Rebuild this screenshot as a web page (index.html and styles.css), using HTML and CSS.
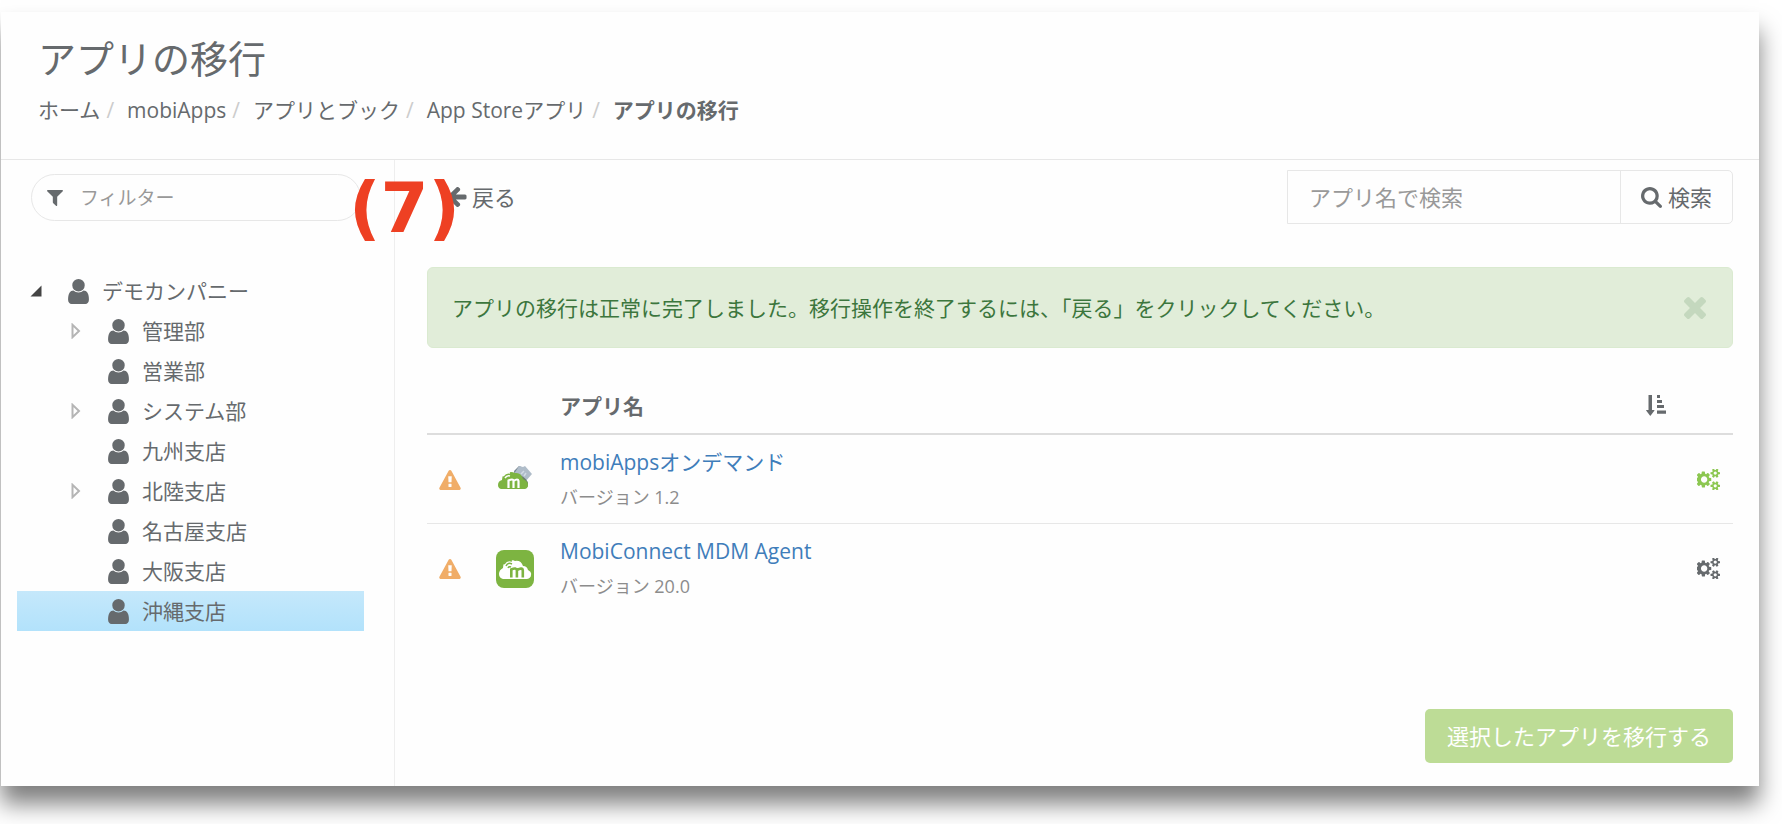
FILE: index.html
```html
<!DOCTYPE html>
<html lang="ja">
<head>
<meta charset="utf-8">
<title>アプリの移行</title>
<link rel="stylesheet" href="styles.css">
</head>
<body>
<svg class="sprite" aria-hidden="true">
  <symbol id="i-filter" viewBox="192 256 1408 1408"><path d="M1595 295q17 41-14 70l-493 493v742q0 42-39 59-13 5-25 5-27 0-45-19l-256-256q-19-19-19-45v-486l-493-493q-31-29-14-70 17-39 59-39h1280q42 0 59 39z"/></symbol>
  <symbol id="i-search" viewBox="64 128 1664 1664"><path d="M1216 832q0-185-131.5-316.5t-316.5-131.5-316.5 131.5-131.5 316.5 131.5 316.5 316.5 131.5 316.5-131.5 131.5-316.5zm512 832q0 52-38 90t-90 38q-54 0-90-38l-343-342q-179 124-399 124-143 0-273.5-55.5t-225-150-150-225-55.5-273.5 55.5-273.5 150-225 225-150 273.5-55.5 273.5 55.5 225 150 150 225 55.5 273.5q0 220-124 399l343 343q37 37 37 90z"/></symbol>
  <symbol id="i-user" viewBox="256 128 1280 1536"><path d="M1536 1399q0 109-62.5 187t-150.5 78h-854q-88 0-150.5-78t-62.5-187q0-85 8.5-160.5t31.5-152 58.5-131 94-89 134.5-34.5q131 128 313 128t313-128q76 0 134.5 34.5t94 89 58.5 131 31.5 152 8.5 160.5zm-256-887q0 159-112.5 271.5t-271.5 112.5-271.5-112.5-112.5-271.5 112.5-271.5 271.5-112.5 271.5 112.5 112.5 271.5z"/></symbol>
  <symbol id="i-warning" viewBox="0 0 1792 1664"><path d="M1024 1375v-190q0-14-9.5-23.5t-22.5-9.5h-192q-13 0-22.5 9.5t-9.5 23.5v190q0 14 9.5 23.5t22.5 9.5h192q13 0 22.5-9.5t9.5-23.5zm-2-374l18-459q0-12-10-19-13-11-24-11h-220q-11 0-24 11-10 7-10 21l17 457q0 10 10 16.5t24 6.5h185q14 0 23.5-6.5t10.5-16.5zm-14-934l768 1408q35 63-2 126-17 29-46.5 46t-63.5 17h-1536q-34 0-63.5-17t-46.5-46q-37-63-2-126l768-1408q17-31 47-49t65-18 65 18 47 49z"/></symbol>
  <symbol id="i-times" viewBox="302 238 1188 1188"><path d="M1490 1322q0 40-28 68l-136 136q-28 28-68 28t-68-28l-294-294-294 294q-28 28-68 28t-68-28l-136-136q-28-28-28-68t28-68l294-294-294-294q-28-28-28-68t28-68l136-136q28-28 68-28t68 28l294 294 294-294q28-28 68-28t68 28l136 136q28 28 28 68t-28 68l-294 294 294 294q28 28 28 68z" transform="translate(0 -128)"/></symbol>
  <symbol id="i-back" viewBox="192 190 1472 1542"><path d="M1664 896v128q0 53-32.500 90.500t-84.500 37.500h-704l293 294q38 36 38 90t-38 90l-75 76q-37 37-90 37-52 0-91-37l-651-652q-37-37-37-90 0-52 37-91l651-650q38-38 91-38 52 0 90 38l75 74q38 38 38 91t-38 91l-293 293h704q52 0 84.500 37.500t32.500 90.500z"/></symbol>
  <symbol id="i-sort" viewBox="0 0 20 21"><path d="M2.500 0h3.500v15h2.200q.6.200.1.800l-3.600 4.700q-.4.400-.8 0L.3 15.800q-.5-.600.1-.8h2.100zM11 0h3v3h-3zM11 5h5v3h-5zM11 10h7v3h-7zM11 15.500h9v3.200h-9z"/></symbol>
  <symbol id="i-cogs" viewBox="0 64 1856 1664"><path d="M832 896q0-106-75-181t-181-75-181 75-75 181 75 181 181 75 181-75 75-181zm768 512q0-52-38-90t-90-38-90 38-38 90q0 53 37.500 90.500t90.500 37.500 90.500-37.500 37.500-90.500zm0-1024q0-52-38-90t-90-38-90 38-38 90q0 53 37.500 90.500t90.500 37.500 90.500-37.500 37.500-90.500zm-448 421v185q0 10-7 19.500t-16 10.500l-155 24q-11 35-32 76 34 48 90 115 7 11 7 20 0 12-7 19-23 30-82.500 89.500t-78.500 59.500q-11 0-21-7l-115-90q-37 19-77 31-11 108-23 155-7 24-30 24h-186q-11 0-20-7.500t-10-17.500l-23-153q-34-10-75-31l-118 89q-7 7-20 7-11 0-21-8-144-133-144-160 0-9 7-19 10-14 41-53t47-61q-23-44-35-82l-152-24q-10-1-17-9.500t-7-19.500v-185q0-10 7-19.500t16-10.500l155-24q11-35 32-76-34-48-90-115-7-11-7-20 0-12 7-20 22-30 82-89t79-59q11 0 21 7l115 90q34-18 77-32 11-108 23-154 7-24 30-24h186q11 0 20 7.500t10 17.500l23 153q34 10 75 31l118-89q8-7 20-7 11 0 21 8 144 133 144 160 0 8-7 19-12 16-42 54t-45 60q23 48 34 82l152 23q10 2 17 10.500t7 19.500zm704 533v140q0 16-149 31-12 27-30 52 51 113 51 138 0 4-4 7-122 71-124 71-8 0-46-47t-52-68q-20 2-30 2t-30-2q-14 21-52 68t-46 47q-2 0-124-71-4-3-4-7 0-25 51-138-18-25-30-52-149-15-149-31v-140q0-16 149-31 13-29 30-52-51-113-51-138 0-4 4-7 4-2 35-20t59-34 30-16q8 0 46 46.500t52 67.500q20-2 30-2t30 2q51-71 92-112l6-2q4 0 124 70 4 3 4 7 0 25-51 138 17 23 30 52 149 15 149 31zm0-1024v140q0 16-149 31-12 27-30 52 51 113 51 138 0 4-4 7-122 71-124 71-8 0-46-47t-52-68q-20 2-30 2t-30-2q-14 21-52 68t-46 47q-2 0-124-71-4-3-4-7 0-25 51-138-18-25-30-52-149-15-149-31v-140q0-16 149-31 13-29 30-52-51-113-51-138 0-4 4-7 4-2 35-20t59-34 30-16q8 0 46 46.500t52 67.500q20-2 30-2t30 2q51-71 92-112l6-2q4 0 124 70 4 3 4 7 0 25-51 138 17 23 30 52 149 15 149 31z"/></symbol>
</svg>

<div class="panel">
  <header class="page-head">
    <h1>アプリの移行</h1>
    <nav aria-label="パンくずリスト">
      <ol class="crumbs">
        <li><a href="#">ホーム</a></li>
        <li><a href="#">mobiApps</a></li>
        <li><a href="#">アプリとブック</a></li>
        <li><a href="#">App Storeアプリ</a></li>
        <li class="current">アプリの移行</li>
      </ol>
    </nav>
  </header>

  <div class="body">
    <aside class="side">
      <label class="filter">
        <svg class="ic-filter"><use href="#i-filter"/></svg>
        <input type="text" placeholder="フィルター" aria-label="フィルター">
      </label>
      <ul class="tree">
        <li class="node"><button class="toggle" aria-label="閉じる"><svg class="open" viewBox="0 0 12 12"><path d="M11.500.5v11H.5z"/></svg></button><svg class="ic-user"><use href="#i-user"/></svg><span>デモカンパニー</span></li>
        <li class="node child"><button class="toggle" aria-label="開く"><svg class="closed" viewBox="0 0 10 16"><path d="M1.500 1.800v12.400L8 8z"/></svg></button><svg class="ic-user"><use href="#i-user"/></svg><span>管理部</span></li>
        <li class="node child"><span class="toggle"></span><svg class="ic-user"><use href="#i-user"/></svg><span>営業部</span></li>
        <li class="node child"><button class="toggle" aria-label="開く"><svg class="closed" viewBox="0 0 10 16"><path d="M1.500 1.800v12.400L8 8z"/></svg></button><svg class="ic-user"><use href="#i-user"/></svg><span>システム部</span></li>
        <li class="node child"><span class="toggle"></span><svg class="ic-user"><use href="#i-user"/></svg><span>九州支店</span></li>
        <li class="node child"><button class="toggle" aria-label="開く"><svg class="closed" viewBox="0 0 10 16"><path d="M1.500 1.800v12.400L8 8z"/></svg></button><svg class="ic-user"><use href="#i-user"/></svg><span>北陸支店</span></li>
        <li class="node child"><span class="toggle"></span><svg class="ic-user"><use href="#i-user"/></svg><span>名古屋支店</span></li>
        <li class="node child"><span class="toggle"></span><svg class="ic-user"><use href="#i-user"/></svg><span>大阪支店</span></li>
        <li class="node child selected"><span class="toggle"></span><svg class="ic-user"><use href="#i-user"/></svg><span>沖縄支店</span></li>
      </ul>
    </aside>

    <main class="main">
      <div class="toolbar">
        <a class="back" href="#"><svg class="ic-back"><use href="#i-back"/></svg>戻る</a>
        <span class="step">(7)</span>
        <form class="search">
          <input type="text" placeholder="アプリ名で検索" aria-label="アプリ名で検索">
          <button type="button"><svg class="ic-search"><use href="#i-search"/></svg>検索</button>
        </form>
      </div>

      <div class="alert" role="status">
        <span>アプリの移行は正常に完了しました。移行操作を終了するには、「戻る」をクリックしてください。</span>
        <button class="close" aria-label="閉じる"><svg class="ic-times"><use href="#i-times"/></svg></button>
      </div>

      <table class="apps">
        <colgroup><col class="c-warn"><col class="c-icon"><col><col class="c-sort"><col class="c-act"></colgroup>
        <thead>
          <tr><th></th><th></th><th>アプリ名</th><th><svg class="ic-sort"><use href="#i-sort"/></svg></th><th></th></tr>
        </thead>
        <tbody>
          <tr>
            <td><svg class="ic-warning"><use href="#i-warning"/></svg></td>
            <td>
              <svg class="ic-app" viewBox="0 0 38 38">
                <path fill="#78868f" d="M18 10l5-5 5 2 3 6-4 5-8 1z"/>
                <path fill="#afbcc9" d="M23 5l4 1 2-1 7 8-7 8-11-8z"/>
                <path fill="#6c7f6a" d="M24 14q8 4 8 9 0 4-3 4l-6-1z"/>
                <path fill="none" stroke="#d0dae4" stroke-width="1.500" d="M25 13l3-3M28 15l2-3"/>
                <path fill="#7db441" d="M5 28q-3-1-3-4 0-4 4-5 0-6 5-7 4-2 8 0 6-1 8 6 5 2 5 6 0 3-3 4z"/>
                <path fill="none" stroke="#fff" stroke-width="1.500" d="M7 15q3-4 7-3M9 17q2-3 5-2"/>
                <path fill="none" stroke="#fff" stroke-width="2.200" d="M12.500 27v-7.500q4.500-2 5 0V27m0-7q4.500-3 5 0V27"/>
              </svg>
            </td>
            <td><a class="name" href="#">mobiAppsオンデマンド</a><div class="ver">バージョン 1.2</div></td>
            <td></td>
            <td><button class="gear on" aria-label="設定"><svg class="ic-cogs"><use href="#i-cogs"/></svg></button></td>
          </tr>
          <tr>
            <td><svg class="ic-warning"><use href="#i-warning"/></svg></td>
            <td>
              <svg class="ic-app" viewBox="0 0 38 38">
                <rect width="38" height="38" rx="8" fill="#7db441"/>
                <path fill="#fff" d="M7 29q-4-1-4-5t4-6q0-7 7-8 4 0 5 1 6-1 8 5 4 0 5 4 4 2 3 5 0 3-4 4z"/>
                <path fill="none" stroke="#7db441" stroke-width="1.500" d="M8 14q3-5 8-3M10 16q2-4 6-2M12 18q1-2 3-1"/>
                <path fill="none" stroke="#7db441" stroke-width="2.600" d="M15.300 27.500v-8q5.200-2.500 5.600 1v7m0-7.500q5.600-3 5.900.5v7"/>
              </svg>
            </td>
            <td><a class="name" href="#">MobiConnect MDM Agent</a><div class="ver">バージョン 20.0</div></td>
            <td></td>
            <td><button class="gear" aria-label="設定"><svg class="ic-cogs"><use href="#i-cogs"/></svg></button></td>
          </tr>
        </tbody>
      </table>

      <div class="actions"><button class="submit" disabled>選択したアプリを移行する</button></div>
    </main>
  </div>
</div>
</body>
</html>
```
FILE: styles.css
```css
* { box-sizing: border-box; }

body {
  margin: 0;
  padding: 12px 23px 39px 1px;
  background: #fff;
  color: #666a6d;
  font: 21px/32px "Open Sans", "Noto Sans CJK JP", sans-serif;
  overflow: hidden;
}

button, input { font: inherit; color: inherit; border: 0; background: none; padding: 0; margin: 0; }
button { cursor: pointer; }
input { min-width: 0; outline: 0; }
input::placeholder { color: #999; opacity: 1; }
a { color: inherit; text-decoration: none; }
svg { display: block; flex: none; fill: currentColor; }
.sprite { display: none; }

.panel {
  background: #fefefe;
  box-shadow: 0 18px 22px rgba(0, 0, 0, .5);
}

/* Heading and breadcrumb */
.page-head { padding: 22px 37px 33px; border-bottom: 1px solid #e7e7e7; }
h1 { margin: 0 0 12px; font-size: 38px; line-height: 48px; font-weight: 400; }
.crumbs { display: flex; margin: 0; padding: 0; list-style: none; }
.crumbs li + li::before { content: "/"; color: #ccc; font-weight: 400; margin: 0 13px 0 6px; }
.crumbs .current { font-weight: 700; }

.body { display: flex; }

/* Department tree */
.side { flex: none; width: 394px; padding: 14px 30px 24px 16px; border-right: 1px solid #eee; }
.filter {
  display: flex;
  align-items: center;
  gap: 17px;
  height: 47px;
  margin: 0 3px 50px 14px;
  padding: 0 15px;
  border: 1px solid #e7e7e7;
  border-radius: 24px;
}
.filter input { flex: 1; font-size: 19px; }
.ic-filter { width: 16px; height: 16px; }
.tree { margin: 0; padding: 0; list-style: none; }
.node { display: flex; align-items: center; height: 40px; padding-left: 11px; }
.node.child { padding-left: 51px; }
.node.selected { background: linear-gradient(#c5e8fb, #b2e2fb); }
.toggle { display: flex; justify-content: center; width: 16px; margin-right: 24px; }
.open { width: 12px; height: 12px; fill: #444; }
.closed { width: 10px; height: 16px; fill: none; stroke: #b5b5b5; stroke-width: 2; }
.ic-user { width: 21px; height: 25px; margin-right: 13px; }

/* Work area */
.main { flex: 1; min-width: 0; padding: 10px 26px 23px 32px; }
.toolbar { position: relative; display: flex; align-items: center; justify-content: space-between; font-size: 22px; margin-bottom: 43px; }
.back { display: flex; align-items: center; gap: 5px; padding-left: 20px; }
.ic-back { width: 20px; height: 20px; }
.step {
  position: absolute;
  left: -78px;
  top: 3px;
  color: #ee4023;
  font: 700 69px/70px "DejaVu Sans", sans-serif;
}
.search { display: flex; height: 54px; width: 446px; border: 1px solid #e7e7e7; border-radius: 0 5px 5px 0; }
.search input { flex: 1; padding: 0 21px; }
.search button { display: flex; align-items: center; gap: 6px; padding: 0 20px; border-left: 1px solid #e7e7e7; }
.ic-search { width: 21px; height: 21px; }

.alert {
  display: flex;
  align-items: center;
  justify-content: space-between;
  height: 81px;
  padding: 0 26px 0 24px;
  border: 1px solid #daead0;
  border-radius: 6px;
  background: #e1edd9;
  color: #3c763d;
}
.close { color: #c4d8be; }
.ic-times { width: 22px; height: 22px; }

.apps { width: 100%; margin-top: 30px; border-collapse: collapse; table-layout: fixed; }
.apps th, .apps td { padding: 0 12px; text-align: left; vertical-align: middle; }
.apps th { height: 56px; border-bottom: 2px solid #ddd; }
.apps td { height: 89px; padding-top: 9px; padding-bottom: 8px; }
.apps tr + tr td { border-top: 1px solid #e7e7e7; }
.c-warn { width: 57px; }
.c-icon { width: 64px; }
.c-sort { width: 51px; }
.c-act { width: 48px; }
.name { display: block; color: #3f7dba; line-height: 36px; }
.ver { color: #8c8c8c; font-size: 18px; line-height: 35px; }
.ic-warning { width: 22px; height: 20px; color: #f0ad68; }
.ic-app { width: 38px; height: 38px; }
.ic-sort { width: 20px; height: 21px; }
.ic-cogs { width: 23px; height: 21px; }
.gear { display: block; }
.gear.on { color: #8cc751; }

.actions { display: flex; justify-content: flex-end; margin-top: 96px; }
.submit { height: 54px; padding: 0 22px; border-radius: 5px; background: #bddc96; color: #fff; font-size: 22px; }
```
